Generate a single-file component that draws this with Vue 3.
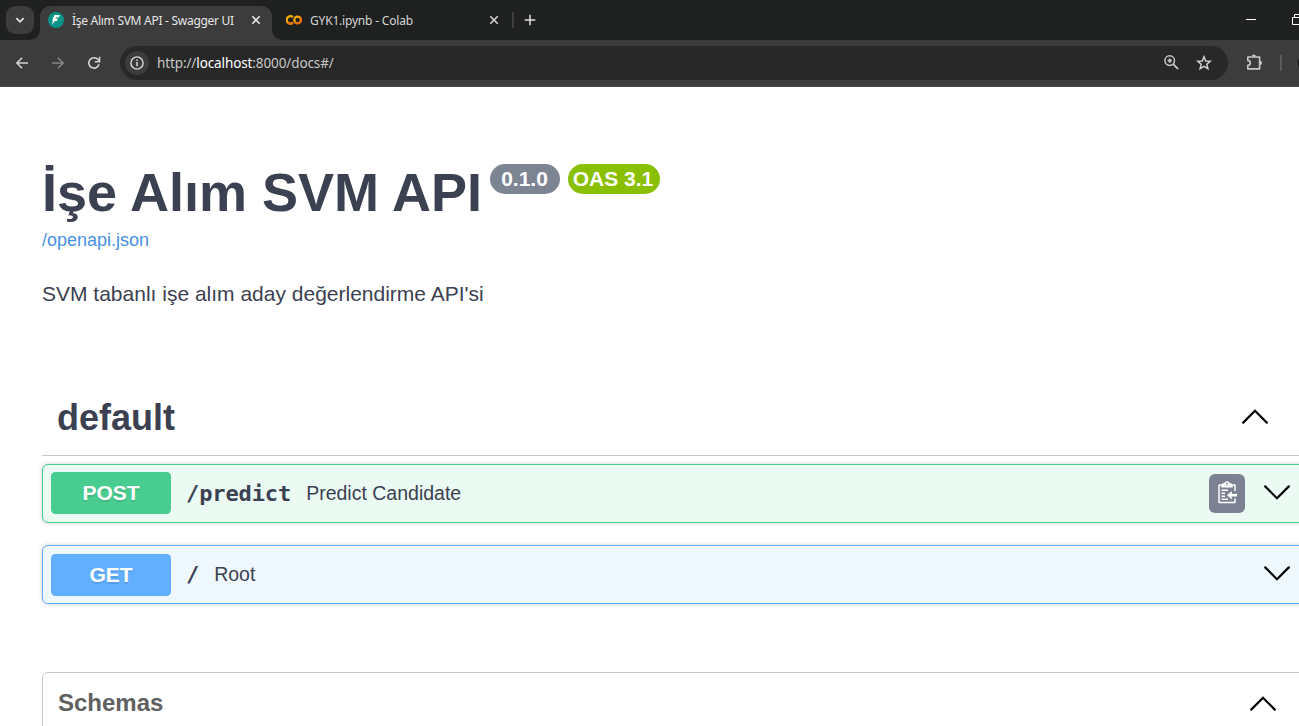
<script setup>
const operations = [
  { method: 'POST', kind: 'post', path: '/predict', summary: 'Predict Candidate', copy: true },
  { method: 'GET', kind: 'get', path: '/', summary: 'Root', copy: false },
]
</script>

<template>
  <div class="window">
    <header class="tabstrip">
      <div class="tab-search">
        <svg width="10" height="8" viewBox="0 0 10 8"><path d="M1.4 2.2 5 5.8 8.6 2.2" fill="none" stroke="#e3e3e3" stroke-width="1.8" /></svg>
      </div>
      <div class="tab active">
        <svg class="flare left" width="10" height="10"><path d="M10 0V10H0A10 10 0 0 0 10 0Z" fill="#3c3c3c" /></svg>
        <svg class="favicon" width="16" height="16" viewBox="0 0 16 16">
          <circle cx="8" cy="8" r="8" fill="#059487" />
          <path d="M6.4 3.1H12L10.7 5.4H8.2L7.5 6.8H10L8.8 9H6.9L3.9 13 5 8.6H4.1Z" fill="#fff" />
        </svg>
        <span class="tab-title first-title">İşe Alım SVM API - Swagger UI</span>
        <svg class="tab-close" width="10" height="10" viewBox="0 0 10 10"><path d="M1.3 1.3 8.7 8.7M8.7 1.3 1.3 8.7" stroke="#e3e3e3" stroke-width="1.6" /></svg>
        <svg class="flare right" width="10" height="10"><path d="M0 0V10H10A10 10 0 0 1 0 0Z" fill="#3c3c3c" /></svg>
      </div>
      <div class="tab idle">
        <svg class="favicon" width="16" height="16" viewBox="0 0 16 16">
          <path d="M6.9 5.2A3.7 3.7 0 1 0 6.9 10.6" fill="none" stroke="#f9ab00" stroke-width="2.4" />
          <circle cx="11.6" cy="7.9" r="3.35" fill="none" stroke="#f9ab00" stroke-width="2.2" />
          <path d="M2 10.4A3.6 3.6 0 0 0 6.9 10.6M9.2 10.3A3.35 3.35 0 0 0 14 5.5" fill="none" stroke="#e8710a" stroke-width="2.3" />
        </svg>
        <span class="tab-title second-title">GYK1.ipynb - Colab</span>
        <svg class="tab-close" width="10" height="10" viewBox="0 0 10 10"><path d="M1.3 1.3 8.7 8.7M8.7 1.3 1.3 8.7" stroke="#d4d4d4" stroke-width="1.6" /></svg>
      </div>
      <i class="tab-separator"></i>
      <svg class="new-tab" width="12" height="12" viewBox="0 0 12 12"><path d="M6 .7V11.3M.7 6H11.3" stroke="#dedede" stroke-width="1.5" /></svg>
      <div class="window-controls">
        <i class="minimize"></i>
        <svg width="12" height="12" viewBox="0 0 12 12"><path d="M.5 3.5H8.5V10.5H.5ZM2.5 3.5V.5H11.5V8.5H8.5" fill="none" stroke="#fff" /></svg>
      </div>
    </header>

    <nav class="toolbar">
      <svg width="12" height="12" viewBox="0 0 12 12"><path d="M12 6H1.2M6.1.7.9 6 6.1 11.3" fill="none" stroke="#d2d2d2" stroke-width="1.5" /></svg>
      <svg class="forward" width="12" height="12" viewBox="0 0 12 12"><path d="M0 6H10.8M5.9.7 11.1 6 5.9 11.3" fill="none" stroke="#858585" stroke-width="1.5" /></svg>
      <svg class="reload" width="14" height="14" viewBox="0 0 14 14"><path d="M12 8.3A5.2 5.2 0 1 1 11 3.6L12.4 5.2" fill="none" stroke="#d2d2d2" stroke-width="1.6" /><path d="M12.5.8V5.7H7.8" fill="none" stroke="#d2d2d2" stroke-width="1.6" /></svg>
      <div class="address">
        <div class="site-info">
          <svg width="14" height="14" viewBox="0 0 14 14"><circle cx="7" cy="7" r="6.1" fill="none" stroke="#d8d8d8" stroke-width="1.4" /><path d="M7 6.1V10.3M7 3.5V5" stroke="#d8d8d8" stroke-width="1.5" /></svg>
        </div>
        <span class="url">http://<b>localhost</b>:8000/docs#/</span>
        <svg class="zoom" width="15" height="15" viewBox="0 0 15 15"><circle cx="5.7" cy="5.6" r="4.8" fill="none" stroke="#c8c8c8" stroke-width="1.5" /><path d="m9.2 9.1 5 5M5.7 3.5v4.2M3.6 5.6h4.2" fill="none" stroke="#c8c8c8" stroke-width="1.8" /></svg>
        <svg width="16" height="16" viewBox="0 0 16 16"><path d="M8 1.8 9.7 6 14.3 6.3 10.8 9.2 11.9 13.7 8 11.3 4.1 13.7 5.2 9.2 1.7 6.3 6.3 6Z" fill="none" stroke="#d2d2d2" stroke-width="1.45" /></svg>
      </div>
      <svg class="extensions" width="17" height="17" viewBox="0 0 17 17"><path d="M1.8 3H13.6V14.9H1.8V11.4Q4.3 11 4.3 8.9T1.8 6.4Z" fill="none" stroke="#c8c8c8" stroke-width="1.6" stroke-linejoin="round" /><path d="M5.7 2.5A2.1 2 0 0 1 9.9 2.5M14 6.8A2 2.1 0 0 1 14 11" fill="#c8c8c8" /></svg>
      <i class="toolbar-separator"></i>
      <i class="profile"></i>
    </nav>

    <main class="page">
      <section class="info">
        <div class="heading">
          <h1>İşe Alım SVM API</h1>
          <span class="badge version">0.1.0</span>
          <span class="badge oas">OAS 3.1</span>
        </div>
        <a class="spec-link">/openapi.json</a>
        <p>SVM tabanlı işe alım aday değerlendirme API'si</p>
      </section>

      <section class="operations">
        <div class="group-title">
          <h2>default</h2>
          <svg class="chevron" width="26" height="15" viewBox="0 0 26 15"><path d="M1.2 13.6 13 1.8 24.8 13.6" /></svg>
        </div>
        <div v-for="op in operations" :key="op.path" class="operation" :class="op.kind">
          <span class="method">{{ op.method }}</span>
          <code>{{ op.path }}</code>
          <span class="summary">{{ op.summary }}</span>
          <span class="actions">
            <span v-if="op.copy" class="copy">
              <svg width="20" height="23" viewBox="0 0 20 23" fill="none" stroke="#fff">
                <path d="M17 10V4H1V21.6H17V17.6" stroke-width="1.5" stroke-linejoin="round" />
                <path d="M5 5V3.2H7Q7.2 1 9 1T11 3.2H13V5" stroke-width="1.7" />
                <path d="M3.2 5.7H14.8" stroke-width="1.6" />
                <path d="M3.5 9.2H10M3.5 12.2H7M3.5 15.2H7M3.5 18.2H10" stroke-width="1.4" />
                <path d="M19 14.2H11" stroke-width="2.6" />
                <path d="M13.8 10 9 14.2 13.8 18.4Z" fill="#fff" stroke="none" />
              </svg>
            </span>
            <svg class="chevron" width="26" height="15" viewBox="0 0 26 15"><path d="M1.2 1.4 13 13.2 24.8 1.4" /></svg>
          </span>
        </div>
      </section>

      <section class="schemas">
        <h3>Schemas</h3>
        <svg class="chevron" width="26" height="15" viewBox="0 0 26 15"><path d="M1.2 13.6 13 1.8 24.8 13.6" /></svg>
      </section>
    </main>
  </div>
</template>

<style>
body { margin: 0; overflow: hidden; }
</style>

<style scoped>
* { box-sizing: border-box; }
svg, i { display: block; flex: none; }
.window { width: 1299px; height: 726px; overflow: hidden; background: #fff; font-family: "Liberation Sans", Arial, sans-serif; }

.tabstrip { display: flex; height: 40px; background: #1f2120; }
.tabstrip > * { flex: none; }
.tab-search { display: flex; align-items: center; justify-content: center; width: 28px; height: 28px; margin: 6px 6px 0; border-radius: 9px; background: #3c3c3c; }
.tab { position: relative; display: flex; align-items: center; margin-top: 6px; height: 34px; padding-bottom: 6px; font-family: "Noto Sans", sans-serif; font-size: 12px; white-space: nowrap; }
.active { width: 232px; padding-left: 8px; border-radius: 10px 10px 0 0; background: #3c3c3c; color: #e6e6e6; }
.idle { width: 240px; padding-left: 14px; color: #d4d4d4; }
.flare { position: absolute; bottom: 0; }
.left { left: -10px; }
.right { right: -10px; }
.tab-title { flex: none; margin-left: 8px; padding-top: 2px; line-height: 18px; }
.first-title { width: 179px; letter-spacing: -0.28px; }
.second-title { width: 180px; margin-left: 8px; letter-spacing: -0.19px; }
.tab-close { margin-left: 0; }
.idle .tab-close { margin-left: -1px; }
.tab-separator { width: 2px; height: 16px; margin-top: 12px; background: #3c3c3c; }
.new-tab { margin: 14px 0 0 10px; }
.window-controls { display: flex; margin-left: 710px; }
.minimize { width: 10px; height: 1px; margin: 19px 36px 0 0; background: #fff; }
.window-controls svg { margin-top: 14px; }

.toolbar { display: flex; align-items: center; height: 47px; padding: 0 0 1px 16px; background: #3c3c3c; border-bottom: 1px solid #4a4a4a; }
.forward { margin-left: 24px; }
.reload { margin-left: 23px; }
.address { display: flex; flex: none; align-items: center; width: 1108px; height: 34px; margin-left: 19px; padding: 0 16px 0 5px; border-radius: 17px; background: #282828; }
.site-info { display: flex; align-items: center; justify-content: center; width: 24px; height: 24px; border-radius: 50%; background: #3c3c3c; }
.url { margin-left: 8px; color: #c7c7c7; font-family: "Noto Sans", sans-serif; font-size: 13.5px; letter-spacing: -0.11px; line-height: 20px; }
.url b { color: #fff; font-weight: 400; }
.zoom { margin: 0 17px 0 auto; }
.extensions { margin-left: 18px; }
.toolbar-separator { width: 2px; height: 16px; margin-left: 17px; background: #5b5b5b; }
.profile { width: 20px; height: 20px; margin-left: 16px; border-radius: 50%; background: #111; }

.page { width: 1299px; padding: 73px 0 0 42px; color: #3b4151; }
h1, h2, h3, p { margin: 0; }
.heading { display: flex; align-items: flex-start; height: 69px; }
h1 { width: 448px; font-size: 54px; line-height: 64px; white-space: nowrap; }
.badge { height: 30px; margin-top: 4px; border-radius: 15px; color: #fff; font-size: 21px; font-weight: 700; line-height: 30px; text-align: center; }
.version { width: 70px; padding-right: 1px; background: #7d8492; }
.oas { width: 92px; margin-left: 8px; padding-right: 2px; background: #89bf04; white-space: nowrap; }
.spec-link { display: block; height: 22px; color: #4990e2; font-size: 18px; line-height: 22px; }
.info p { margin-top: 30px; font-size: 21px; line-height: 26px; }

.operations { margin-top: 73px; }
.group-title { display: flex; align-items: center; justify-content: space-between; height: 76px; margin-bottom: 8px; padding: 0 31px 0 15px; border-bottom: 1px solid #c4c6ca; }
.group-title .chevron { margin-bottom: 2px; }
h2 { font-size: 36px; line-height: 44px; }
.chevron { fill: none; stroke: #000; stroke-width: 2.2; stroke-linecap: round; }
.operation { display: flex; align-items: center; width: 1264px; height: 59px; margin-bottom: 22px; padding: 0 15px 0 8px; border: 1px solid; border-radius: 6px; box-shadow: 0 0 5px rgba(0, 0, 0, .19); }
.post { border-color: #49cc90; background: #ebfaf3; }
.get { border-color: #61affe; background: #eff7ff; }
.method { width: 120px; height: 42px; border-radius: 4.5px; color: #fff; font-size: 21px; font-weight: 700; line-height: 42px; text-align: center; text-shadow: 0 1.5px 0 rgba(0, 0, 0, .1); }
.post .method { margin-bottom: 2px; background: #49cc90; }
.get .method { background: #61affe; }
code { margin-left: 15px; font-family: "DejaVu Sans Mono", monospace; font-size: 22px; font-weight: 700; letter-spacing: -0.1px; }
.summary { margin-left: 15px; font-size: 19.5px; }
.actions { display: flex; align-items: center; gap: 19px; margin-left: auto; }
.actions .chevron { margin-bottom: 3px; }
.copy { display: flex; align-items: center; justify-content: center; width: 36px; height: 39px; padding: 0 0 3px 2px; border-radius: 6px; background: #7d8293; }
.schemas { display: flex; align-items: center; justify-content: space-between; width: 1264px; height: 100px; margin-top: 68px; padding: 0 29px 38px 15px; border: 1px solid #c4c6ca; border-radius: 6px; color: #606060; }
h3 { font-size: 24px; }
</style>
